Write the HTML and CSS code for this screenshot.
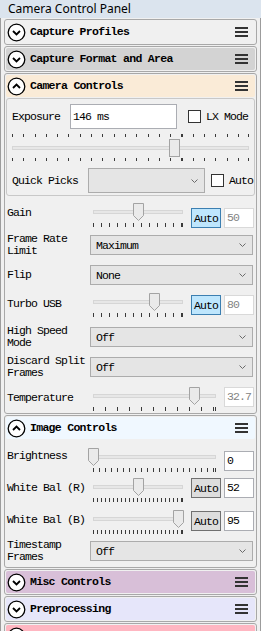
FILE: index.html
```html
<!DOCTYPE html>
<html>
<head>
<meta charset="utf-8">
<link rel="stylesheet" href="styles.css">
</head>
<body>
<div class="window">
  <div class="titlebar">Camera Control Panel</div>
  <div class="content">

    <section class="panel">
      <div class="hdr">
        <svg class="circ" width="19" height="19" viewBox="0 0 19 19"><circle cx="9.5" cy="9.5" r="8.3" fill="#fff" stroke="#000" stroke-width="1.3"/><path d="M6 8L9.5 11.5L13 8" fill="none" stroke="#000" stroke-width="1.8"/></svg>
        <span class="hdr-title">Capture Profiles</span>
        <svg width="13" height="10" viewBox="0 0 13 10"><rect y="0" width="13" height="2" fill="#333"/><rect y="4" width="13" height="2" fill="#333"/><rect y="8" width="13" height="2" fill="#333"/></svg>
      </div>
    </section>

    <section class="panel">
      <div class="hdr hdr-gray">
        <svg class="circ" width="19" height="19" viewBox="0 0 19 19"><circle cx="9.5" cy="9.5" r="8.3" fill="#fff" stroke="#000" stroke-width="1.3"/><path d="M6 8L9.5 11.5L13 8" fill="none" stroke="#000" stroke-width="1.8"/></svg>
        <span class="hdr-title">Capture Format and Area</span>
        <svg width="13" height="10" viewBox="0 0 13 10"><rect y="0" width="13" height="2" fill="#333"/><rect y="4" width="13" height="2" fill="#333"/><rect y="8" width="13" height="2" fill="#333"/></svg>
      </div>
    </section>

    <section class="panel">
      <div class="hdr hdr-peach">
        <svg class="circ" width="19" height="19" viewBox="0 0 19 19"><circle cx="9.5" cy="9.5" r="8.3" fill="#fff" stroke="#000" stroke-width="1.3"/><path d="M6 11L9.5 7.5L13 11" fill="none" stroke="#000" stroke-width="1.8"/></svg>
        <span class="hdr-title">Camera Controls</span>
        <svg width="13" height="10" viewBox="0 0 13 10"><rect y="0" width="13" height="2" fill="#333"/><rect y="4" width="13" height="2" fill="#333"/><rect y="8" width="13" height="2" fill="#333"/></svg>
      </div>

      <div class="gbox">
        <div class="exp-row">
          <span class="exp-lbl">Exposure</span>
          <div class="exp-input">146 ms</div>
          <div class="chk-wrap"><span class="chk"></span><span>LX Mode</span></div>
        </div>
        <div class="exp-slider">
          <div class="ticks t-exp"></div>
          <div class="slider s-exp">
            <div class="groove"></div>
            <svg class="handle" style="left:68.6%" width="11" height="18" viewBox="0 0 11 18"><rect x="0.5" y="0.5" width="10" height="17" fill="#eaeaea" stroke="#a3a3a3"/></svg>
          </div>
          <div class="ticks t-exp t-after"></div>
        </div>
        <div class="qp-row">
          <span class="qp-lbl">Quick Picks</span>
          <div class="combo qp-combo"><span></span><svg width="7" height="4" viewBox="0 0 7 4"><path d="M0.5 0.5L3.5 3.5L6.5 0.5" fill="none" stroke="#6a6a6a"/></svg></div>
          <div class="chk-wrap qp-chk"><span class="chk"></span><span>Auto</span></div>
        </div>
      </div>

      <div class="srow mt7">
        <span class="lbl lt4">Gain</span>
        <div class="swrap">
          <div class="slider">
            <div class="groove"></div>
            <svg class="handle" style="left:50%" width="11" height="18" viewBox="0 0 11 18"><path d="M0.5 0.5H10.5V12.5L5.5 17.5L0.5 12.5Z" fill="#eaeaea" stroke="#a3a3a3"/></svg>
          </div>
          <div class="ticks t8"></div>
        </div>
        <div class="auto on bt5">Auto</div>
        <div class="val dis bt5">50</div>
      </div>

      <div class="crow mt5">
        <span class="lbl">Frame Rate<br>Limit</span>
        <div class="combo"><span>Maximum</span><svg width="7" height="4" viewBox="0 0 7 4"><path d="M0.5 0.5L3.5 3.5L6.5 0.5" fill="none" stroke="#6a6a6a"/></svg></div>
      </div>

      <div class="crow mt6">
        <span class="lbl">Flip</span>
        <div class="combo"><span>None</span><svg width="7" height="4" viewBox="0 0 7 4"><path d="M0.5 0.5L3.5 3.5L6.5 0.5" fill="none" stroke="#6a6a6a"/></svg></div>
      </div>

      <div class="srow mt6">
        <span class="lbl lt5">Turbo USB</span>
        <div class="swrap">
          <div class="slider">
            <div class="groove"></div>
            <svg class="handle" style="left:68%" width="11" height="18" viewBox="0 0 11 18"><path d="M0.5 0.5H10.5V12.5L5.5 17.5L0.5 12.5Z" fill="#eaeaea" stroke="#a3a3a3"/></svg>
          </div>
          <div class="ticks t8"></div>
        </div>
        <div class="auto on bt2">Auto</div>
        <div class="val dis bt2">80</div>
      </div>

      <div class="crow mt8">
        <span class="lbl">High Speed<br>Mode</span>
        <div class="combo"><span>Off</span><svg width="7" height="4" viewBox="0 0 7 4"><path d="M0.5 0.5L3.5 3.5L6.5 0.5" fill="none" stroke="#6a6a6a"/></svg></div>
      </div>

      <div class="crow mt6">
        <span class="lbl">Discard Split<br>Frames</span>
        <div class="combo"><span>Off</span><svg width="7" height="4" viewBox="0 0 7 4"><path d="M0.5 0.5L3.5 3.5L6.5 0.5" fill="none" stroke="#6a6a6a"/></svg></div>
      </div>

      <div class="srow mt8 pb1">
        <span class="lbl lt5">Temperature</span>
        <div class="swrap">
          <div class="slider">
            <div class="groove"></div>
            <svg class="handle" style="left:82.4%" width="11" height="18" viewBox="0 0 11 18"><path d="M0.5 0.5H10.5V12.5L5.5 17.5L0.5 12.5Z" fill="#eaeaea" stroke="#a3a3a3"/></svg>
          </div>
          <div class="ticks t12"></div>
        </div>
        <div class="val dis">32.7</div>
      </div>
    </section>

    <section class="panel">
      <div class="hdr hdr-blue">
        <svg class="circ" width="19" height="19" viewBox="0 0 19 19"><circle cx="9.5" cy="9.5" r="8.3" fill="#fff" stroke="#000" stroke-width="1.3"/><path d="M6 11L9.5 7.5L13 11" fill="none" stroke="#000" stroke-width="1.8"/></svg>
        <span class="hdr-title">Image Controls</span>
        <svg width="13" height="10" viewBox="0 0 13 10"><rect y="0" width="13" height="2" fill="#333"/><rect y="4" width="13" height="2" fill="#333"/><rect y="8" width="13" height="2" fill="#333"/></svg>
      </div>

      <div class="srow mt9">
        <span class="lbl lt2">Brightness</span>
        <div class="swrap">
          <div class="slider">
            <div class="groove"></div>
            <svg class="handle" style="left:0%" width="11" height="18" viewBox="0 0 11 18"><path d="M0.5 0.5H10.5V12.5L5.5 17.5L0.5 12.5Z" fill="#eaeaea" stroke="#a3a3a3"/></svg>
          </div>
          <div class="ticks t6"></div>
        </div>
        <div class="val bt3">0</div>
      </div>

      <div class="srow mt6">
        <span class="lbl lt4">White Bal (R)</span>
        <div class="swrap">
          <div class="slider">
            <div class="groove"></div>
            <svg class="handle" style="left:50%" width="11" height="18" viewBox="0 0 11 18"><path d="M0.5 0.5H10.5V12.5L5.5 17.5L0.5 12.5Z" fill="#eaeaea" stroke="#a3a3a3"/></svg>
          </div>
          <div class="ticks t4"></div>
        </div>
        <div class="auto">Auto</div>
        <div class="val">52</div>
      </div>

      <div class="srow mt8">
        <span class="lbl lt4">White Bal (B)</span>
        <div class="swrap">
          <div class="slider">
            <div class="groove"></div>
            <svg class="handle" style="left:95.5%" width="11" height="18" viewBox="0 0 11 18"><path d="M0.5 0.5H10.5V12.5L5.5 17.5L0.5 12.5Z" fill="#eaeaea" stroke="#a3a3a3"/></svg>
          </div>
          <div class="ticks t4"></div>
        </div>
        <div class="auto bt1">Auto</div>
        <div class="val bt1">95</div>
      </div>

      <div class="crow mt5 pb3">
        <span class="lbl">Timestamp<br>Frames</span>
        <div class="combo"><span>Off</span><svg width="7" height="4" viewBox="0 0 7 4"><path d="M0.5 0.5L3.5 3.5L6.5 0.5" fill="none" stroke="#6a6a6a"/></svg></div>
      </div>
    </section>

    <section class="panel">
      <div class="hdr hdr-thistle">
        <svg class="circ" width="19" height="19" viewBox="0 0 19 19"><circle cx="9.5" cy="9.5" r="8.3" fill="#fff" stroke="#000" stroke-width="1.3"/><path d="M6 8L9.5 11.5L13 8" fill="none" stroke="#000" stroke-width="1.8"/></svg>
        <span class="hdr-title">Misc Controls</span>
        <svg width="13" height="10" viewBox="0 0 13 10"><rect y="0" width="13" height="2" fill="#333"/><rect y="4" width="13" height="2" fill="#333"/><rect y="8" width="13" height="2" fill="#333"/></svg>
      </div>
    </section>

    <section class="panel">
      <div class="hdr hdr-lavender">
        <svg class="circ" width="19" height="19" viewBox="0 0 19 19"><circle cx="9.5" cy="9.5" r="8.3" fill="#fff" stroke="#000" stroke-width="1.3"/><path d="M6 8L9.5 11.5L13 8" fill="none" stroke="#000" stroke-width="1.8"/></svg>
        <span class="hdr-title">Preprocessing</span>
        <svg width="13" height="10" viewBox="0 0 13 10"><rect y="0" width="13" height="2" fill="#333"/><rect y="4" width="13" height="2" fill="#333"/><rect y="8" width="13" height="2" fill="#333"/></svg>
      </div>
    </section>

    <section class="panel">
      <div class="hdr hdr-pink">
        <svg class="circ" width="19" height="19" viewBox="0 0 19 19"><circle cx="9.5" cy="9.5" r="8.3" fill="#fff" stroke="#000" stroke-width="1.3"/><path d="M6 8L9.5 11.5L13 8" fill="none" stroke="#000" stroke-width="1.8"/></svg>
      </div>
    </section>

  </div>
</div>
</body>
</html>
```

FILE: styles.css
```css
* { box-sizing: border-box; }

body {
  margin: 0;
  background: #f0f0f0;
  font-family: "Liberation Mono", "DejaVu Sans Mono", monospace;
  font-size: 11.5px;
  letter-spacing: -0.9px;
  color: #000;
}

.window {
  width: 261px;
  height: 631px;
  overflow: hidden;
  background: #f0f0f0;
}

.titlebar {
  height: 18px;
  background: #dbe4ee;
  font-family: "Noto Sans", "Open Sans", sans-serif;
  font-size: 12px;
  letter-spacing: 0;
  line-height: 17px;
  padding-left: 8px;
  color: #000;
}

.content {
  height: 613px;
  border-left: 1px solid #9c9c9c;
  border-right: 1px solid #9c9c9c;
  padding: 1px 3px 0 3px;
}

.panel {
  border: 1px solid #a8a8a8;
  border-radius: 3px;
  padding: 1px;
  margin-bottom: 1px;
}

.hdr {
  height: 22px;
  display: flex;
  align-items: center;
  gap: 4px;
  padding: 0 7px 0 1px;
  border-radius: 2px;
}

.hdr-gray { background: #d3d3d3; }
.hdr-peach { background: #faebd7; }
.hdr-blue { background: #f0f8ff; }
.hdr-thistle { background: #d8bfd8; }
.hdr-lavender { background: #e6e6fa; }
.hdr-pink { background: #ffb6c1; }

.circ { flex: none; }

.hdr-title {
  flex: 1;
  font-weight: bold;
  letter-spacing: -0.7px;
  line-height: 14px;
}

/* group box */
.gbox {
  margin-top: 1px;
  border: 1px solid #c8c8c8;
  border-radius: 3px;
  padding: 5px 5px 2px 5px;
}

.exp-row {
  display: flex;
  align-items: center;
  height: 25px;
}
.exp-lbl { width: 58px; flex: none; }
.exp-input {
  width: 107px;
  height: 25px;
  flex: none;
  border: 1px solid #abadb3;
  background: #fff;
  padding-left: 2px;
  line-height: 23px;
}
.chk-wrap {
  display: flex;
  align-items: center;
  gap: 5px;
  margin-left: 11px;
  flex: none;
  white-space: nowrap;
}
.chk {
  width: 13px;
  height: 13px;
  border: 1px solid #333;
  background: #fff;
}

.exp-slider { margin-top: 5px; }
.s-exp { margin-top: 2px; }

.qp-row {
  display: flex;
  align-items: center;
  height: 25px;
  margin-top: 7px;
}
.qp-lbl { width: 76px; flex: none; white-space: nowrap; }
.combo.qp-combo { width: 117px; height: 25px; flex: none; margin-right: 0; }
.qp-chk { margin-left: 6px; }

/* sliders */
.slider {
  position: relative;
  height: 18px;
  display: flex;
  align-items: center;
}
.groove {
  width: 100%;
  height: 4px;
  border: 1px solid #d6d6d6;
  background: #e7e7e7;
}
.handle {
  position: absolute;
  top: 0;
  margin-left: -5.5px;
}

.ticks {
  height: 4px;
  margin-top: 2px;
  background:
    linear-gradient(#3a3a3a, #3a3a3a) right / 1px 100% no-repeat,
    repeating-linear-gradient(90deg, #3a3a3a 0 1px, transparent 1px var(--step));
}
.t-exp { --step: 11.3px; height: 3px; margin-top: 0; }
.t-exp.t-after { margin-top: 1px; }
.t8 { --step: 8px; }
.t12 { --step: 12px; }
.t6 { --step: 6px; }
.t4 { --step: 4px; }

/* rows */
.srow, .crow {
  display: flex;
  padding-left: 1px;
}
.srow { align-items: flex-start; }
.crow { align-items: center; min-height: 24px; }

.lbl {
  width: 83px;
  flex: none;
  line-height: 12px;
  white-space: nowrap;
}
.lt2 { margin-top: 2px; }
.lt4 { margin-top: 4px; }
.lt5 { margin-top: 5px; }

.swrap {
  flex: 1;
  padding-left: 3px;
  margin-right: 8px;
}

.auto {
  width: 30px;
  height: 20px;
  flex: none;
  border: 1px solid #707070;
  background: #dddddd;
  display: flex;
  align-items: center;
  justify-content: center;
  margin-right: 3px;
}
.auto.on {
  border-color: #3c7fb1;
  background: #bee6fd;
}

.val {
  width: 30px;
  height: 20px;
  flex: none;
  margin-right: 1px;
  border: 1px solid #abadb3;
  background: #fff;
  padding-left: 2px;
  line-height: 18px;
}
.val.dis {
  color: #838383;
  border-color: #d9d9d9;
}

.bt1 { margin-top: 1px; }
.bt2 { margin-top: 2px; }
.bt3 { margin-top: 3px; }
.bt5 { margin-top: 5px; }

.combo {
  flex: 1;
  height: 20px;
  margin-right: 2px;
  display: flex;
  align-items: center;
  justify-content: space-between;
  border: 1px solid #acacac;
  background: #e5e5e5;
  padding: 0 6px 0 5px;
}

.mt5 { margin-top: 5px; }
.mt6 { margin-top: 6px; }
.mt7 { margin-top: 7px; }
.mt8 { margin-top: 8px; }
.mt9 { margin-top: 9px; }
.pb1 { margin-bottom: 1px; }
.pb3 { margin-bottom: 3px; }
```
